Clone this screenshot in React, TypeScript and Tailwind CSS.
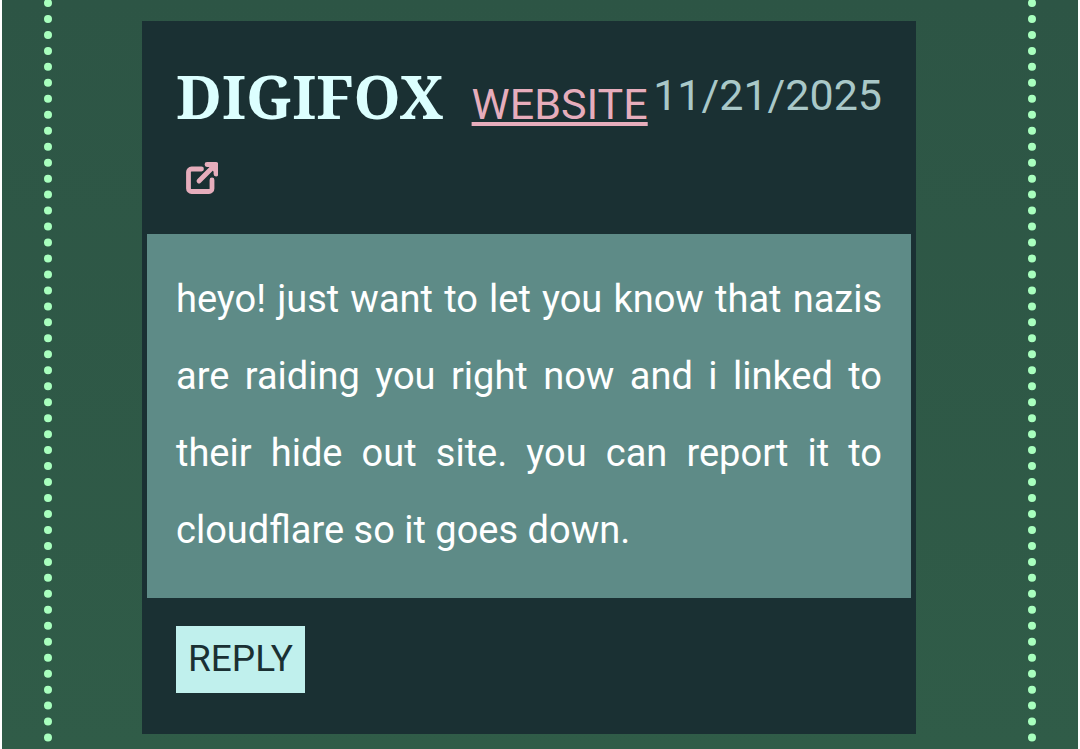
import React from 'react';

interface Comment {
  author: string;
  website: string;
  date: string;
  body: string;
}

const comment: Comment = {
  author: 'DIGIFOX',
  website: '#',
  date: '11/21/2025',
  body: 'heyo! just want to let you know that nazis are raiding you right now and i linked to their hide out site. you can report it to cloudflare so it goes down.',
};

const ExternalLinkIcon: React.FC = () => (
  <svg className="inline-block h-8 w-8" viewBox="0 0 32 32" fill="none" stroke="currentColor" strokeWidth="4.800" strokeLinecap="round" strokeLinejoin="round" aria-hidden="true">
    <path d="M15.500 7H5.500a3 3 0 0 0-3 3V26.500a3 3 0 0 0 3 3H23a3 3 0 0 0 3-3V18" />
    <path d="M13 19L27 5" />
    <path d="M21 2.500H30V12" />
    <path d="M21 2.500H30V12Z" fill="currentColor" stroke="none" />
  </svg>
);

const CommentCard: React.FC<{ comment: Comment }> = ({ comment }) => (
  <article className="border-[5px] border-[#1a3033] bg-[#1a3033]">
    <header className="flex items-start justify-between px-[29px] pt-10 pb-5">
      <div className="min-w-0 flex-1 leading-[60px]">
        <h2 className="mr-7 inline text-[60px] font-bold text-[#dcffff] font-['Noto_Serif','Liberation_Serif',serif]">
          {comment.author}
        </h2>
        <a href={comment.website} className="text-[43px] text-[#e6adbc]">
          <span className="underline decoration-4 underline-offset-3">WEBSITE</span>{' '}
          <span className="ml-[10px] inline-block"><ExternalLinkIcon /></span>
        </a>
      </div>
      <time dateTime="2025-11-21" className="shrink-0 text-[43px] leading-[58px] text-[#a9c8c8]">
        {comment.date}
      </time>
    </header>
    <p className="bg-[#5e8b87] px-[29px] pt-[27px] pb-[29px] text-justify text-[38px] leading-[77px] text-white">
      {comment.body}
    </p>
    <footer className="flex px-[29px] pt-7 pb-9">
      <button type="button" className="bg-[#c0f0ed] px-3 pt-[5px] pb-[7px] text-[37px] leading-[55px] text-[#1a3033]">
        REPLY
      </button>
    </footer>
  </article>
);

export default function App() {
  return (
    <div className="h-screen overflow-hidden border-x-2 border-white bg-linear-to-b from-[#2d5545] to-[#305c48] px-[42px] font-[Roboto,sans-serif]">
      <main className="-mt-px border-x-8 border-dotted border-[#a8ffbe] pt-[22px] pr-28 pb-6 pl-[90px]">
        <CommentCard comment={comment} />
      </main>
    </div>
  );
}
